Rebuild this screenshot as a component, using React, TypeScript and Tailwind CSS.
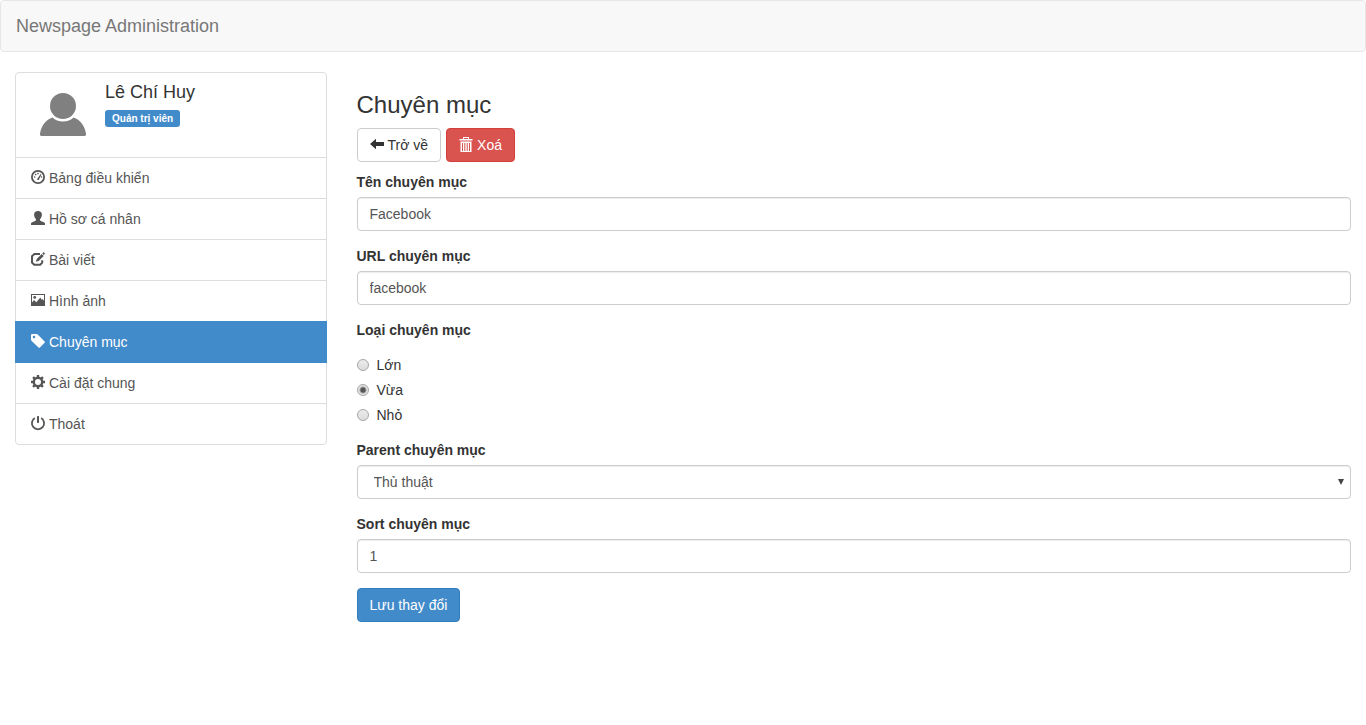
import { useState } from "react";
import type { ReactNode } from "react";

function Icon({ children }: { children: ReactNode }) {
  return (
    <svg
      viewBox="0 0 14 14"
      className="mb-[2px] h-[14px] w-[14px] shrink-0 overflow-visible"
      fill="currentColor"
      aria-hidden="true"
    >
      {children}
    </svg>
  );
}

const icons = {
  dashboard: (
    <Icon>
      <circle cx="7" cy="7" r="6.100" fill="none" stroke="currentColor" strokeWidth="1.800" />
      <path d="M6 9.200 9.600 4l.8.600L8 9.500a1.100 1.100 0 0 1-2-.3z" />
      <circle cx="3.600" cy="7" r=".8" />
      <circle cx="4.700" cy="4.600" r=".8" />
      <circle cx="7" cy="3.600" r=".8" />
      <circle cx="10.500" cy="7" r=".8" />
    </Icon>
  ),
  user: (
    <Icon>
      <path d="M7 0c2.400 0 3.900 1.400 3.900 3.600 0 1.900-.8 3.600-1.900 4.600v.9c0 .5.300.8.8 1l3 1.200c.8.300 1.200.7 1.200 1.300V14H0v-1.400c0-.6.4-1 1.200-1.300l3-1.200c.5-.2.8-.5.8-1v-.9C3.900 7.200 3.100 5.500 3.100 3.600 3.100 1.400 4.600 0 7 0z" />
    </Icon>
  ),
  edit: (
    <Icon>
      <path
        d="M9 2H3.400L1 4.200v6.300L3.200 12.700h6l2-2V8.300"
        fill="none"
        stroke="currentColor"
        strokeWidth="2"
      />
      <path d="M5 9.800 5.700 7l5-5 2 2-5 5zM11.300 1.400l.9-.9c.3-.3.600-.3.900 0l.5.500c.4.400.4.700 0 1l-.8.900z" />
    </Icon>
  ),
  picture: (
    <Icon>
      <path
        fillRule="evenodd"
        d="M0 1h14v12H0zM1 2v7.500l2-2.500 2.300 2.300L9.300 4.500l1.400 2.300.8-.8L13 7.800V2z"
      />
      <circle cx="3.700" cy="4.400" r="1.400" />
    </Icon>
  ),
  tag: (
    <Icon>
      <path
        fillRule="evenodd"
        d="M0 .9C0 .4.4 0 .9 0h4.700c.4 0 .8.200 1.100.5l6.900 6.900c.5.500.5.900 0 1.400l-4.700 4.800c-.5.500-.9.500-1.400 0L.5 6.700C.2 6.400 0 6 0 5.600zM3 1.700a1.300 1.300 0 1 0 0 2.600 1.300 1.300 0 0 0 0-2.600z"
      />
    </Icon>
  ),
  cog: (
    <Icon>
      <circle cx="7" cy="7" r="4.200" fill="none" stroke="currentColor" strokeWidth="2.400" />
      <path
        d="M7 0v2.500M7 11.500V14M0 7h2.500M11.500 7H14M2.050 2.050l1.800 1.800M10.150 10.150l1.800 1.800M2.050 11.950l1.800-1.800M10.150 3.850l1.800-1.800"
        stroke="currentColor"
        strokeWidth="2.400"
      />
    </Icon>
  ),
  off: (
    <Icon>
      <path
        d="M3.800 2A6.100 6.100 0 1 0 10.200 2"
        fill="none"
        stroke="currentColor"
        strokeWidth="1.800"
      />
      <path d="M6 .5c0-.3.200-.5.500-.5h1c.3 0 .5.200.5.500v6c0 .3-.2.500-.5.500h-1c-.3 0-.5-.2-.5-.5z" />
    </Icon>
  ),
  back: (
    <Icon>
      <path d="M0 7 6 1.700V5h8v4H6v3.300z" />
    </Icon>
  ),
  trash: (
    <Icon>
      <path
        fillRule="evenodd"
        d="M4 0h6v2h3.500v1.500H.5V2H4zm1 .9V2h4V.9zM1.500 4.500h11V15h-11zM3 6v8h1V6zm2.300 0v8h1V6zm2.400 0v8h1V6zM10 6v8h1V6z"
      />
    </Icon>
  ),
};

const menu = [
  { label: "Bảng điều khiển", icon: icons.dashboard },
  { label: "Hồ sơ cá nhân", icon: icons.user },
  { label: "Bài viết", icon: icons.edit },
  { label: "Hình ảnh", icon: icons.picture },
  { label: "Chuyên mục", icon: icons.tag, active: true },
  { label: "Cài đặt chung", icon: icons.cog },
  { label: "Thoát", icon: icons.off },
];

const controlClass =
  "block h-[34px] w-full rounded border border-[#ccc] bg-white text-[14px] leading-5 text-[#555] shadow-[inset_0_1px_1px_rgba(0,0,0,0.075)] outline-none focus:border-[#66afe9]";

function Field({ id, label, children }: { id: string; label: string; children: ReactNode }) {
  return (
    <div className="mb-[15px]">
      <label htmlFor={id} className="mb-[5px] block font-bold">
        {label}
      </label>
      {children}
    </div>
  );
}

function Profile() {
  return (
    <div className="flex gap-[10px] px-[15px] py-[10px]">
      <svg viewBox="0 0 64 64" className="h-16 w-16" fill="#808080" aria-hidden="true">
        <circle cx="32" cy="23" r="13" />
        <path d="M21.500 34.500C24 37 27.800 38.500 32 38.500s8-1.500 10.500-4C49 36.500 54 43 55 51c.1 1.300-.3 2-1.500 2h-43c-1.200 0-1.600-.7-1.500-2 1-8 6-14.500 12.500-16.500z" />
      </svg>
      <div>
        <h4 className="mb-[9px] text-[18px] leading-[18px]">Lê Chí Huy</h4>
        <span className="block w-fit rounded-[3px] bg-[#428bca] px-[7px] text-[10px] leading-[17px] font-bold text-white">
          Quản trị viên
        </span>
      </div>
    </div>
  );
}

function Sidebar() {
  return (
    <aside className="w-1/4 shrink-0 px-[15px]">
      <div className="rounded border border-[#ddd]">
        <Profile />
        <nav>
          {menu.map((item) => (
            <a
              key={item.label}
              href="#"
              className={
                item.active
                  ? "relative z-10 -mx-px -mb-px flex items-center gap-1 border border-[#428bca] bg-[#428bca] px-[15px] py-[10px] text-white"
                  : "flex items-center gap-1 border-t border-[#ddd] px-[15px] py-[10px] text-[#555] hover:bg-[#f5f5f5]"
              }
            >
              {item.icon}
              {item.label}
            </a>
          ))}
        </nav>
      </div>
    </aside>
  );
}

export default function App() {
  const [size, setSize] = useState("Vừa");

  return (
    <div className="font-['Liberation_Sans',Arial,sans-serif] text-[14px] leading-5 text-[#333]">
      <header className="mb-5 rounded border border-[#e7e7e7] bg-[#f8f8f8] px-[15px] py-[15px]">
        <a href="#" className="block w-fit text-[18px] leading-5 text-[#777]">
          Newspage Administration
        </a>
      </header>
      <div className="flex items-start">
        <Sidebar />
        <main className="min-w-0 flex-1 px-[15px] pt-5">
          <h3 className="mb-[10px] text-[24px] leading-[26px]">Chuyên mục</h3>
          <div className="mb-[10px] flex gap-[5px]">
            <a
              href="#"
              className="flex items-center gap-1 rounded border border-[#ccc] bg-white px-3 py-[6px] hover:bg-[#ebebeb]"
            >
              {icons.back}
              Trở về
            </a>
            <button
              type="button"
              className="flex items-center gap-1 rounded border border-[#d43f3a] bg-[#d9534f] px-3 py-[6px] text-white hover:bg-[#d2322d]"
            >
              {icons.trash}
              Xoá
            </button>
          </div>
          <form onSubmit={(e) => e.preventDefault()}>
            <Field id="name" label="Tên chuyên mục">
              <input id="name" type="text" defaultValue="Facebook" className={`${controlClass} px-3`} />
            </Field>
            <Field id="url" label="URL chuyên mục">
              <input id="url" type="text" defaultValue="facebook" className={`${controlClass} px-3`} />
            </Field>
            <fieldset className="mb-[15px]">
              <legend className="mb-[15px] font-bold">Loại chuyên mục</legend>
              <div className="flex flex-col gap-[5px]">
                {["Lớn", "Vừa", "Nhỏ"].map((option) => (
                  <label key={option} className="flex w-fit items-center gap-2">
                    <input
                      type="radio"
                      name="size"
                      value={option}
                      checked={size === option}
                      onChange={() => setSize(option)}
                      className="h-3 w-3 appearance-none rounded-full border border-[#a6a6a6] bg-linear-to-b from-[#ececec] to-[#dcdcdc] checked:bg-[radial-gradient(circle,#555_0_2px,#e4e4e4_4px)]"
                    />
                    {option}
                  </label>
                ))}
              </div>
            </fieldset>
            <Field id="parent" label="Parent chuyên mục">
              <div className="relative">
                <select id="parent" className={`${controlClass} appearance-none px-4`}>
                  <option>Thủ thuật</option>
                </select>
                <svg
                  viewBox="0 0 6 6"
                  className="pointer-events-none absolute top-[14px] right-[7px] h-[6px] w-[6px]"
                  fill="#444"
                  aria-hidden="true"
                >
                  <path d="M0 0h6L3 6z" />
                </svg>
              </div>
            </Field>
            <Field id="sort" label="Sort chuyên mục">
              <input id="sort" type="text" defaultValue="1" className={`${controlClass} px-3`} />
            </Field>
            <button
              type="submit"
              className="rounded border border-[#357ebd] bg-[#428bca] px-3 py-[6px] text-white hover:bg-[#3276b1]"
            >
              Lưu thay đổi
            </button>
          </form>
        </main>
      </div>
    </div>
  );
}
